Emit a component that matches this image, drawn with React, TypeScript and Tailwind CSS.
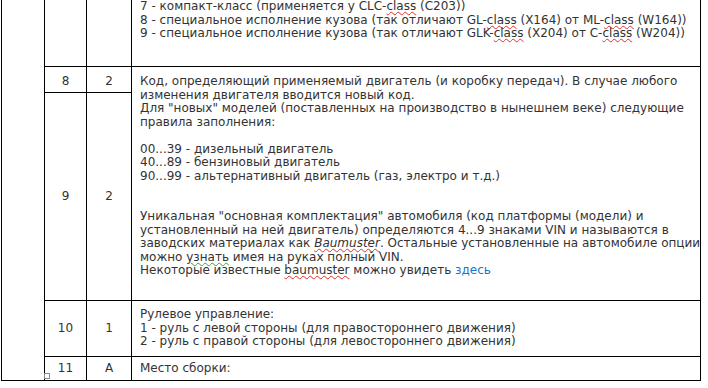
import React from 'react';

// spell-check style squiggle under a word
const Squiggle: React.FC<{ children: React.ReactNode; green?: boolean; italic?: boolean }> = ({ children, green, italic }) => (
  <span
    className={`underline decoration-wavy decoration-1 underline-offset-[1px] ${green ? 'decoration-[#3aa13a]' : 'decoration-[#e0302a]'} ${italic ? 'italic' : ''}`}
  >
    {children}
  </span>
);

const NumCell: React.FC<{ children?: React.ReactNode; className?: string }> = ({ children, className = '' }) => (
  <div className={`flex items-center justify-center border-l border-black ${className}`}>{children}</div>
);

const App: React.FC = () => {
  return (
    <div
      className="relative w-[708px] h-[388px] overflow-hidden bg-white text-[12px] leading-[13.5px] text-[#333]"
      style={{ fontFamily: '"DejaVu Sans", Verdana, sans-serif' }}
    >
      <div className="ml-px flex h-[381px] w-[700px] border-b border-black">
        {/* outer spanning column */}
        <div className="w-[43px] shrink-0 border-l border-black" />

        <div className="flex flex-1 flex-col border-l border-black">
          {/* tail of previous row */}
          <div className="flex h-[67px] border-b border-black">
            <div className="w-[41px]" />
            <NumCell className="w-[45px]" />
            <div className="flex-1 whitespace-nowrap border-l border-r border-black pl-2">
              <div>
                7 - компакт-класс (применяется у CLC-<Squiggle>class</Squiggle> (C203))
              </div>
              <div>
                8 - специальное исполнение кузова (так отличают GL-<Squiggle>class</Squiggle> (X164) от ML-
                <Squiggle>class</Squiggle> (W164))
              </div>
              <div>
                9 - специальное исполнение кузова (так отличают GLK-<Squiggle>class</Squiggle> (X204) от C-
                <Squiggle>class</Squiggle> (W204))
              </div>
            </div>
          </div>

          {/* rows 8 and 9 share the description cell */}
          <div className="flex h-[234px] border-b border-black">
            <div className="flex w-[86px] flex-col">
              <div className="flex h-[26px] border-b border-black">
                <div className="w-[41px] pt-[8px] text-center">8</div>
                <div className="w-[45px] border-l border-black pt-[8px] text-center">2</div>
              </div>
              <div className="flex flex-1">
                <div className="flex w-[41px] items-center justify-center">9</div>
                <NumCell className="w-[45px]">2</NumCell>
              </div>
            </div>
            <div className="flex-1 whitespace-nowrap border-l border-r border-black pl-2 pt-[8px]">
              <p>
                Код, определяющий применяемый двигатель (и коробку передач). В случае любого
                <br />
                изменения двигателя вводится новый код.
                <br />
                Для "новых" моделей (поставленных на производство в нынешнем веке) следующие
                <br />
                правила заполнения:
              </p>
              <p className="mt-[13.5px]">
                00...39 - дизельный двигатель
                <br />
                40...89 - бензиновый двигатель
                <br />
                90...99 - альтернативный двигатель (газ, электро и т.д.)
              </p>
              <p className="mt-[27px]">
                Уникальная "основная комплектация" автомобиля (код платформы (модели) и
                <br />
                установленный на ней двигатель) определяются 4...9 знаками VIN и называются в
                <br />
                заводских материалах как <Squiggle italic>Baumuster</Squiggle>. Остальные установленные на автомобиле опции
                <br />
                можно <Squiggle green>узнать</Squiggle> имея на руках полный VIN.
                <br />
                Некоторые известные <Squiggle>baumuster</Squiggle> можно увидеть{' '}
                <a href="#" className="text-[#1a73c9]">
                  здесь
                </a>
              </p>
            </div>
          </div>

          {/* row 10 */}
          <div className="flex h-[56px] border-b border-black">
            <div className="flex w-[41px] items-center justify-center">10</div>
            <NumCell className="w-[45px]">1</NumCell>
            <div className="flex flex-1 flex-col justify-center whitespace-nowrap border-l border-r border-black pl-2">
              <div>Рулевое управление:</div>
              <div>1 - руль с левой стороны (для правостороннего движения)</div>
              <div>2 - руль с правой стороны (для левостороннего движения)</div>
            </div>
          </div>

          {/* row 11 */}
          <div className="flex flex-1">
            <div className="flex w-[41px] items-center justify-center">11</div>
            <NumCell className="w-[45px]">A</NumCell>
            <div className="flex flex-1 items-center border-l border-r border-black pl-2">Место сборки:</div>
          </div>
        </div>
      </div>

      {/* table resize handle */}
      <div className="absolute left-[44px] top-[373px] h-[6px] w-[6px] border border-[#8a8a8a] bg-white" />
    </div>
  );
};

export default App;
